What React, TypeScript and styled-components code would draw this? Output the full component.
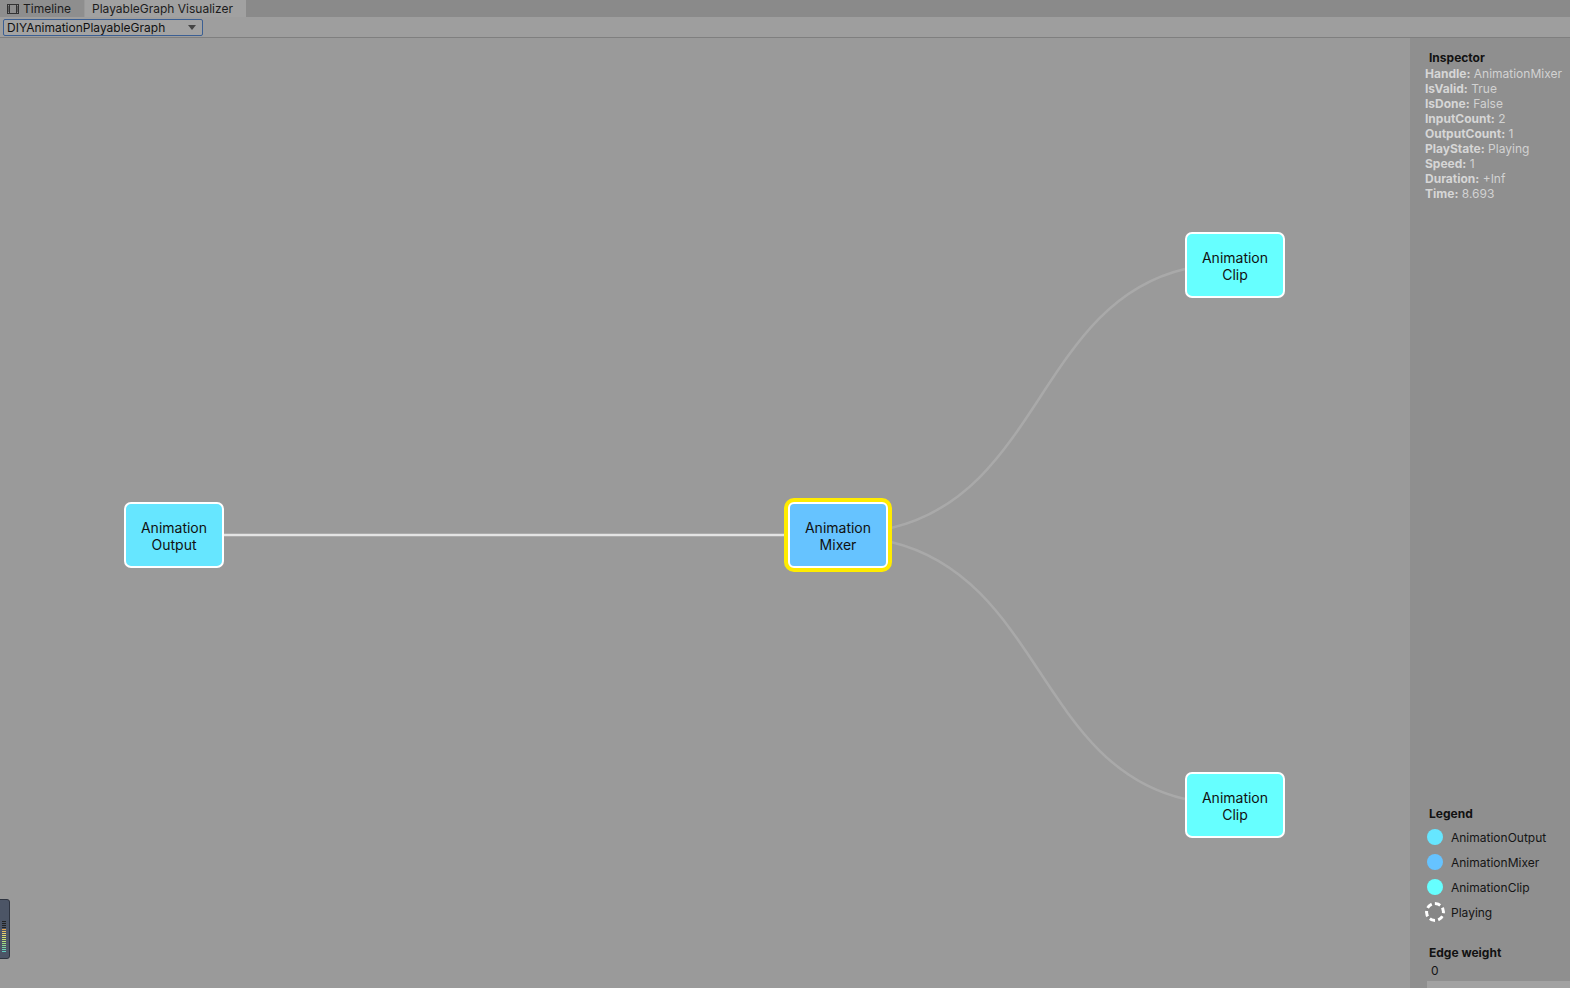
import React from "react";
import styled, { createGlobalStyle } from "styled-components";

const Global = createGlobalStyle`
  html, body { margin: 0; padding: 0; }
  body { font-family: Inter, "Noto Sans", sans-serif; background: #9a9a9a; overflow: hidden; }
  * { box-sizing: border-box; }
`;

const Page = styled.div`
  width: 1570px;
  height: 988px;
  display: flex;
  flex-direction: column;
  background: #9a9a9a;
`;

const TabBar = styled.div`
  height: 17px;
  display: flex;
  background: #8a8a8a;
`;

const Tab = styled.div<{ $active?: boolean }>`
  height: 17px;
  display: flex;
  align-items: center;
  gap: 4px;
  padding-left: 7px;
  width: ${(p) => (p.$active ? "162px" : "85px")};
  background: ${(p) => (p.$active ? "#a1a1a1" : "#8e8e8e")};
  border-right: 1px solid ${(p) => (p.$active ? "#8a8a8a" : "#999")};
  color: #1c1c1c;
  font-size: 12px;
`;

const Toolbar = styled.div`
  height: 21px;
  display: flex;
  align-items: center;
  padding-left: 3px;
  background: #9e9e9e;
  border-bottom: 1px solid #7f7f7f;
`;

const Dropdown = styled.div`
  width: 200px;
  height: 17px;
  border: 1px solid #3b5f93;
  border-radius: 2px;
  display: flex;
  align-items: center;
  justify-content: space-between;
  padding: 0 6px 0 3px;
  font-size: 12px;
  color: #111;
  background: #a3a3a3;
`;

const Caret = styled.div`
  width: 0;
  height: 0;
  border-left: 4px solid transparent;
  border-right: 4px solid transparent;
  border-top: 5px solid #444;
`;

const Body = styled.div`
  flex: 1;
  display: flex;
  min-height: 0;
`;

const Canvas = styled.div`
  position: relative;
  flex: 1;
  background: #9a9a9a;
`;

const Edges = styled.svg`
  position: absolute;
  left: 0;
  top: 0;
  width: 100%;
  height: 100%;
`;

const Node = styled.div<{ $x: number; $y: number; $bg: string; $selected?: boolean }>`
  position: absolute;
  left: ${(p) => p.$x}px;
  top: ${(p) => p.$y}px;
  width: 100px;
  height: 66px;
  background: ${(p) => p.$bg};
  border: 2px solid #ffffff;
  border-radius: 7px;
  display: flex;
  align-items: center;
  justify-content: center;
  text-align: center;
  padding-top: 2px;
  font-size: 14px;
  line-height: 17px;
  color: #111;
  ${(p) => (p.$selected ? "box-shadow: 0 0 0 4px #ffec00; border-radius: 6px;" : "")}
`;

const Meter = styled.div`
  position: absolute;
  left: -3px;
  top: 861px;
  width: 13px;
  height: 60px;
  background: #4c5566;
  border: 1px solid #2e3440;
  border-radius: 3px;
  display: flex;
  flex-direction: column;
  align-items: flex-end;
  justify-content: flex-end;
  padding: 0 3px 6px 0;
  gap: 1px;
`;

const MeterBar = styled.div<{ $c: string }>`
  width: 4px;
  height: 1px;
  background: ${(p) => p.$c};
`;

const Panel = styled.div`
  width: 160px;
  flex: 0 0 160px;
  background: #8f8f8f;
  display: flex;
  flex-direction: column;
  padding: 12px 0 0 15px;
`;

const Heading = styled.div`
  font-size: 12px;
  font-weight: 700;
  color: #121212;
  margin-left: 4px;
  height: 15px;
  line-height: 15px;
`;

const PropList = styled.div`
  display: flex;
  flex-direction: column;
  margin-top: 1px;
`;

const Prop = styled.div`
  font-size: 12px;
  line-height: 15px;
  color: #d2d2d2;
  white-space: nowrap;
  b { font-weight: 700; color: #d6d6d6; }
`;

const Spacer = styled.div`
  flex: 1;
`;

const LegendList = styled.div`
  display: flex;
  flex-direction: column;
  gap: 9px;
  margin-top: 8px;
  margin-left: 2px;
`;

const LegendItem = styled.div`
  display: flex;
  align-items: center;
  gap: 8px;
  font-size: 12px;
  color: #151515;
  height: 16px;
`;

const Dot = styled.div<{ $c: string }>`
  width: 16px;
  height: 16px;
  border-radius: 50%;
  background: ${(p) => p.$c};
`;

const Ring = styled.div`
  width: 20px;
  height: 20px;
  margin-left: -2px;
  margin-right: -2px;
  border-radius: 50%;
  border: 3px dashed #ffffff;
  background: #868686;
`;

const Gap = styled.div`
  height: 25px;
`;

const Value = styled.div`
  font-size: 12px;
  color: #151515;
  margin-left: 6px;
  margin-top: 3px;
  height: 15px;
`;

const BottomStrip = styled.div`
  height: 7px;
  margin-top: 3px;
  margin-left: 2px;
  background: #a2a2a2;
`;

const props: [string, string][] = [
  ["Handle", "AnimationMixer"],
  ["IsValid", "True"],
  ["IsDone", "False"],
  ["InputCount", "2"],
  ["OutputCount", "1"],
  ["PlayState", "Playing"],
  ["Speed", "1"],
  ["Duration", "+Inf"],
  ["Time", "8.693"],
];

const meterColors = [
  "#222", "#222", "#222", "#222", "#e0a050", "#e6c060", "#e8d070", "#e0dc70", "#d8e070",
  "#c8e070", "#b8e07a", "#a0dc80", "#90d890", "#80d4a0", "#70d0b0", "#60ccc0",
];

export default function App() {
  return (
    <Page>
      <Global />
      <TabBar>
        <Tab>
          <svg width="12" height="10" viewBox="0 0 12 10">
            <rect x="0.5" y="0.5" width="11" height="9" fill="none" stroke="#333" />
            <rect x="2.5" y="0.5" width="7" height="9" fill="none" stroke="#333" />
            <path d="M0 3h2M0 5h2M0 7h2M10 3h2M10 5h2M10 7h2" stroke="#333" />
          </svg>
          Timeline
        </Tab>
        <Tab $active>PlayableGraph Visualizer</Tab>
      </TabBar>
      <Toolbar>
        <Dropdown>
          DIYAnimationPlayableGraph
          <Caret />
        </Dropdown>
      </Toolbar>
      <Body>
        <Canvas>
          <Edges>
            <line x1="223" y1="497" x2="786" y2="497" stroke="#e4e4e4" strokeWidth="2.5" />
            <path
              d="M891 490 C 1040 455, 1040 265, 1185 231"
              fill="none"
              stroke="#a9a9a9"
              strokeWidth="2.5"
            />
            <path
              d="M891 504 C 1040 540, 1040 728, 1185 761"
              fill="none"
              stroke="#a9a9a9"
              strokeWidth="2.5"
            />
          </Edges>
          <Node $x={124} $y={464} $bg="#66e6ff">
            Animation
            <br />
            Output
          </Node>
          <Node $x={788} $y={464} $bg="#66c3ff" $selected>
            Animation
            <br />
            Mixer
          </Node>
          <Node $x={1185} $y={194} $bg="#66ffff">
            Animation
            <br />
            Clip
          </Node>
          <Node $x={1185} $y={734} $bg="#66ffff">
            Animation
            <br />
            Clip
          </Node>
          <Meter>
            {meterColors.map((c, i) => (
              <MeterBar key={i} $c={c} />
            ))}
          </Meter>
        </Canvas>
        <Panel>
          <Heading>Inspector</Heading>
          <PropList>
            {props.map(([k, v]) => (
              <Prop key={k}>
                <b>{k}:</b> {v}
              </Prop>
            ))}
          </PropList>
          <Spacer />
          <Heading>Legend</Heading>
          <LegendList>
            <LegendItem>
              <Dot $c="#66e6ff" />
              AnimationOutput
            </LegendItem>
            <LegendItem>
              <Dot $c="#66c3ff" />
              AnimationMixer
            </LegendItem>
            <LegendItem>
              <Dot $c="#66ffff" />
              AnimationClip
            </LegendItem>
            <LegendItem>
              <Ring />
              Playing
            </LegendItem>
          </LegendList>
          <Gap />
          <Heading>Edge weight</Heading>
          <Value>0</Value>
          <BottomStrip />
        </Panel>
      </Body>
    </Page>
  );
}
